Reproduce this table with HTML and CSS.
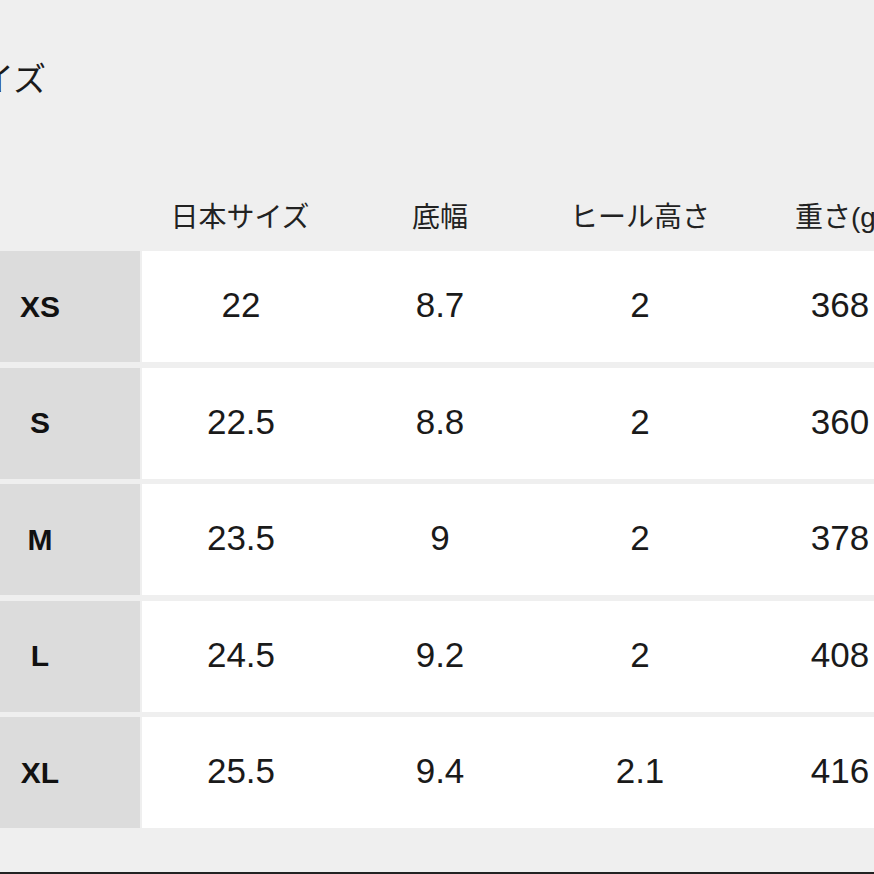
FILE: index.html
```html
<!DOCTYPE html>
<html lang="ja">
<head>
<meta charset="utf-8">
<title>サイズ</title>
<link rel="stylesheet" href="styles.css">
</head>
<body>
<div class="page">
  <h2 class="title">サイズ</h2>
  <div class="table">
    <div class="head">
      <div class="hcell label"></div>
      <div class="hcell">日本サイズ</div>
      <div class="hcell">底幅</div>
      <div class="hcell">ヒール高さ</div>
      <div class="hcell">重さ(g)</div>
    </div>
    <div class="row">
      <div class="label-cell">XS</div>
      <div class="cells"><div class="cell first">22</div><div class="cell">8.7</div><div class="cell">2</div><div class="cell">368</div></div>
    </div>
    <div class="row">
      <div class="label-cell">S</div>
      <div class="cells"><div class="cell first">22.5</div><div class="cell">8.8</div><div class="cell">2</div><div class="cell">360</div></div>
    </div>
    <div class="row">
      <div class="label-cell">M</div>
      <div class="cells"><div class="cell first">23.5</div><div class="cell">9</div><div class="cell">2</div><div class="cell">378</div></div>
    </div>
    <div class="row">
      <div class="label-cell">L</div>
      <div class="cells"><div class="cell first">24.5</div><div class="cell">9.2</div><div class="cell">2</div><div class="cell">408</div></div>
    </div>
    <div class="row">
      <div class="label-cell">XL</div>
      <div class="cells"><div class="cell first">25.5</div><div class="cell">9.4</div><div class="cell">2.1</div><div class="cell">416</div></div>
    </div>
  </div>
  <div class="bottom-bar"></div>
</div>
</body>
</html>
```

FILE: styles.css
```css
html, body {
  margin: 0;
  padding: 0;
  background: #efefef;
  overflow: hidden;
}
.page {
  width: 874px;
  height: 874px;
  overflow: hidden;
  font-family: "Liberation Sans", "Noto Sans CJK JP", sans-serif;
  color: #1a1a1a;
}
.title {
  margin: 60px 0 0 -52px;
  height: 40px;
  line-height: 40px;
  font-size: 33px;
  font-weight: normal;
  white-space: nowrap;
  color: #1a1a1a;
}
.table {
  margin-top: 80px;
  margin-left: -60px;
  width: 1000px;
}
.head {
  display: flex;
  height: 71px;
  align-items: center;
  padding-bottom: 2px;
  box-sizing: border-box;
}
.hcell {
  width: 200px;
  flex: none;
  text-align: center;
  font-size: 28px;
  white-space: nowrap;
  color: #222;
}
.row {
  display: flex;
  height: 111px;
  margin-bottom: 5.6px;
}
.label-cell {
  width: 200px;
  flex: none;
  background: #dcdcdc;
  display: flex;
  align-items: center;
  justify-content: center;
  font-weight: bold;
  font-size: 30px;
  color: #111;
}
.cells {
  display: flex;
  background: #fff;
  flex: none;
  width: 800px;
}
.cell {
  width: 200px;
  flex: none;
  box-sizing: border-box;
  display: flex;
  align-items: center;
  justify-content: center;
  font-size: 35px;
  padding-bottom: 3px;
  color: #1a1a1a;
}
.cell.first {
  border-left: 2px solid #efefef;
}
.bottom-bar {
  margin-top: 44px;
  height: 2px;
  background: #222;
}
```
